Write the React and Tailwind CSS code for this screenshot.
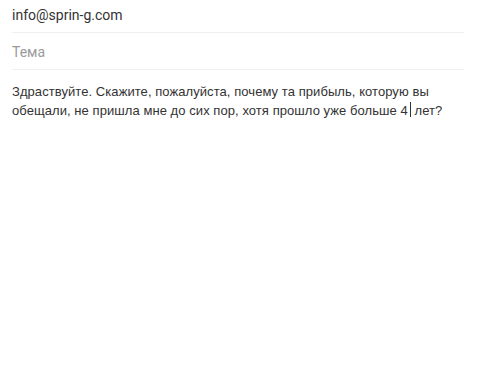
export default function App() {
  return (
    <div className="w-[480px] h-[388px] bg-white px-3 font-['Roboto',sans-serif]">
      <div className="w-[452px]">
        <div className="h-[33px] flex items-center pb-[2px] border-b border-[#f0f0f0] text-[14px] text-[#333]">
          info@sprin-g.com
        </div>
        <div className="h-[37px] flex items-center pt-[2px] border-b border-[#f0f0f0] text-[14px] text-[#9a9a9a]">
          Тема
        </div>
        <p className="pt-[12px] text-[13px] leading-[19px] tracking-[0.005em] text-[#333] font-['Liberation_Sans',Arial,sans-serif]">
          Здраствуйте. Скажите, пожалуйста, почему та прибыль, которую вы
          обещали, не пришла мне до сих пор, хотя прошло уже больше 4<span className="inline-block w-px h-[15px] ml-[2px] bg-[#333] align-[-2px]"></span> лет?
        </p>
      </div>
    </div>
  );
}
